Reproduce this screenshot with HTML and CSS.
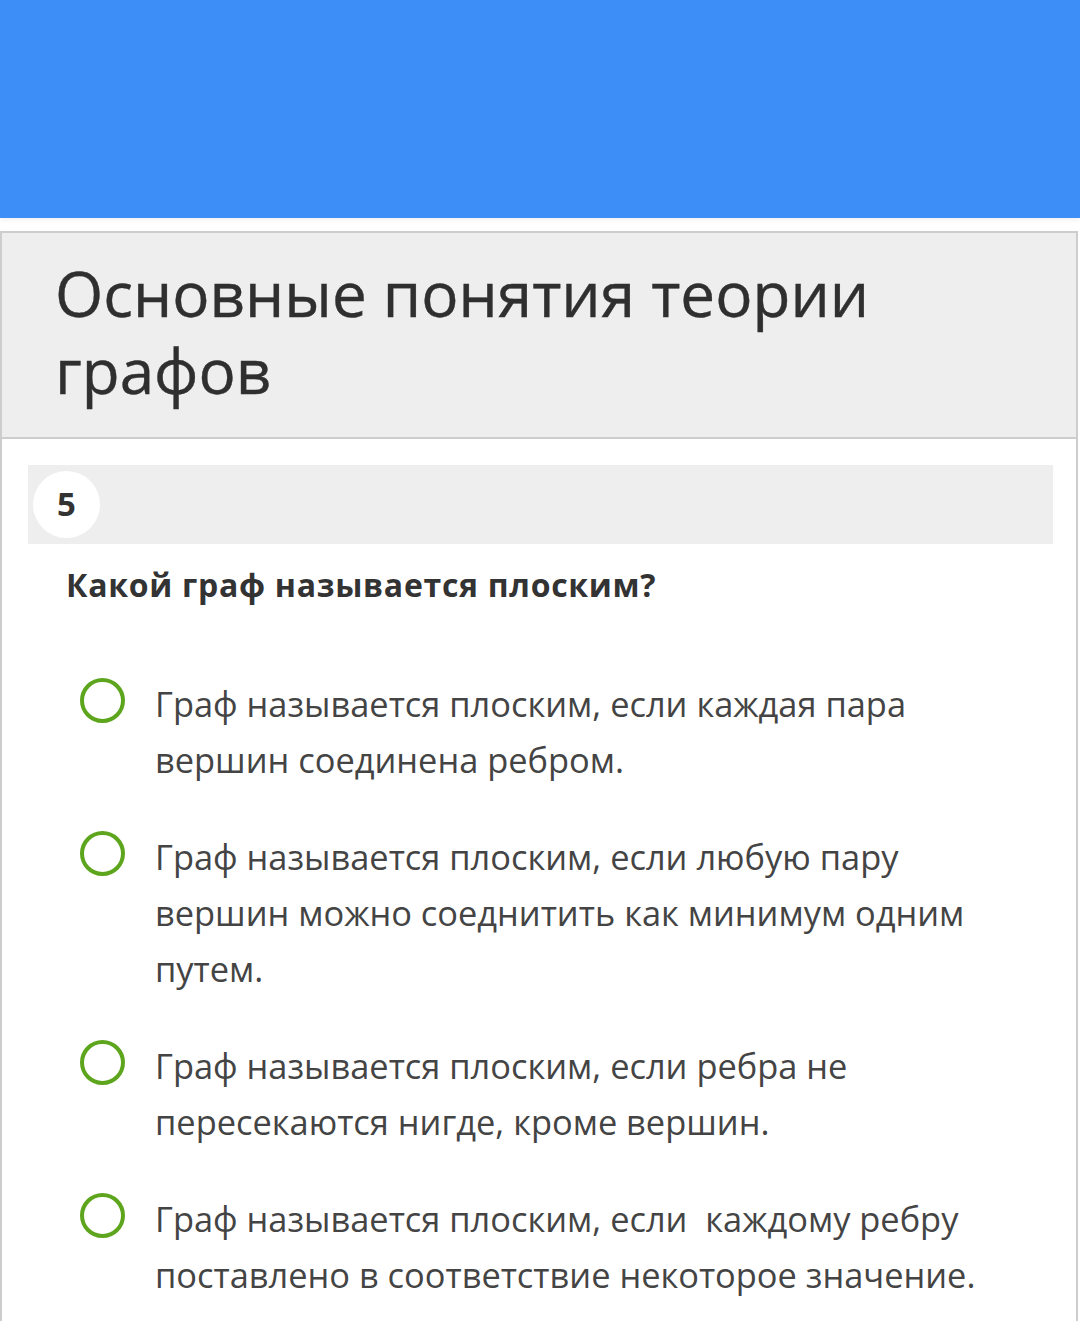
FILE: index.html
```html
<!DOCTYPE html>
<html lang="ru">
<head>
<meta charset="utf-8">
<link rel="stylesheet" href="styles.css">
</head>
<body>
<header class="topbar"></header>
<main class="card">
  <div class="card-head">
    <h1 class="title">Основные понятия теории графов</h1>
  </div>
  <div class="card-body">
    <div class="qbar"><span class="qnum">5</span></div>
    <p class="question">Какой граф называется плоским?</p>
    <ul class="options">
      <li class="option"><span class="radio"></span><span class="otext">Граф называется плоским, если каждая пара вершин соединена ребром.</span></li>
      <li class="option"><span class="radio"></span><span class="otext">Граф называется плоским, если любую пару вершин можно соеднитить как минимум одним путем.</span></li>
      <li class="option"><span class="radio"></span><span class="otext">Граф называется плоским, если ребра не пересекаются нигде, кроме вершин.</span></li>
      <li class="option"><span class="radio"></span><span class="otext">Граф называется плоским, если&nbsp; каждому ребру поставлено в соответствие некоторое значение.</span></li>
    </ul>
  </div>
</main>
</body>
</html>
```

FILE: styles.css
```css
* { box-sizing: border-box; }
html, body { margin: 0; padding: 0; }
body {
  background: #ffffff;
  font-family: "Open Sans", "Noto Sans", sans-serif;
  color: #333333;
  width: 1080px;
  overflow: hidden;
}
.topbar {
  height: 218px;
  background: #3e8ef8;
  box-shadow: 0 2px 6px rgba(0,0,0,0.06);
}
.card {
  margin-top: 13px;
  width: 1078px;
  border: 2px solid #cdcdcd;
  border-bottom: none;
  min-height: 1100px;
}
.card-head {
  background: #eeeeee;
  border-bottom: 2px solid #cdcdcd;
  padding: 22px 20px 28px 53px;
}
.title {
  margin: 0;
  font-size: 62px;
  line-height: 77px;
  font-weight: 400;
  color: #2f2f2f;
  -webkit-text-stroke: 0.4px #2f2f2f;
}
.card-body {
  padding: 26px 23px 0 26px;
}
.qbar {
  height: 79px;
  background: #eeeeee;
  display: flex;
  align-items: center;
  padding-left: 5px;
}
.qnum {
  width: 67px;
  height: 67px;
  border-radius: 50%;
  background: #ffffff;
  display: flex;
  align-items: center;
  justify-content: center;
  font-weight: 700;
  font-size: 33px;
  color: #333333;
  padding-bottom: 2px;
}
.question {
  margin: 21px 0 0 38px;
  font-size: 32px;
  line-height: 40px;
  font-weight: 700;
  letter-spacing: 0.7px;
  color: #333333;
}
.options {
  list-style: none;
  margin: 71px 0 0 0;
  padding: 0 0 0 52px;
}
.option {
  display: flex;
  align-items: flex-start;
  margin-bottom: 41px;
}
.radio {
  flex: none;
  width: 45px;
  height: 45px;
  border: 4px solid #5ea51e;
  border-radius: 50%;
  margin-top: 2px;
}
.otext {
  margin-left: 30px;
  font-size: 34.4px;
  line-height: 56px;
  color: #444444;
  max-width: 840px;
}
```
